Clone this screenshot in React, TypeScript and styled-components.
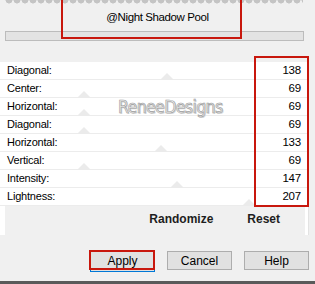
import React from "react";
import styled, { createGlobalStyle } from "styled-components";

const GlobalStyle = createGlobalStyle`
  html, body {
    margin: 0;
    padding: 0;
    background: #f0f0f0;
    overflow: hidden;
  }
  body {
    font-family: "Liberation Sans", Arial, sans-serif;
  }
`;

type Row = { label: string; value: number };

const rows: Row[] = [
  { label: "Diagonal:", value: 138 },
  { label: "Center:", value: 69 },
  { label: "Horizontal:", value: 69 },
  { label: "Diagonal:", value: 69 },
  { label: "Horizontal:", value: 133 },
  { label: "Vertical:", value: 69 },
  { label: "Intensity:", value: 147 },
  { label: "Lightness:", value: 207 },
];

const App = () => {
  return (
    <>
      <GlobalStyle />
      <Dialog>
        <Scallops />
        <PresetName>@Night Shadow Pool</PresetName>
        <PresetBar />
        <Spacer />
        <Panel>
          {rows.map((row, i) => (
            <SliderRow key={i}>
              <Label>{row.label}</Label>
              <Thumb style={{ left: row.value * 1.2 - 6 }} />
              <Value>{row.value}</Value>
            </SliderRow>
          ))}
          <Footer>
            <LinkButton>Randomize</LinkButton>
            <LinkButton>Reset</LinkButton>
          </Footer>
          <Watermark>ReneeDesigns</Watermark>
        </Panel>
        <Buttons>
          <ButtonWrap>
            <Button $focused>Apply</Button>
            <Marker $top={-1} $left={-1} $width={66} $height={20} />
          </ButtonWrap>
          <Button>Cancel</Button>
          <Button>Help</Button>
        </Buttons>
        <BottomEdge />
        <Marker $top={-4} $left={61} $width={181} $height={43} />
        <Marker $top={56} $left={254} $width={55} $height={151} />
      </Dialog>
    </>
  );
};

export default App;

const Dialog = styled.div`
  position: relative;
  width: 315px;
  height: 284px;
  display: flex;
  flex-direction: column;
  background: #f0f0f0;
  overflow: hidden;
`;

const Scallops = styled.div`
  height: 4px;
  margin: 0 12px 0 5px;
  background: radial-gradient(circle at 4px 0, #c4c4c4 3.2px, #f0f0f0 3.8px);
  background-size: 8px 4px;
`;

const PresetName = styled.div`
  height: 27px;
  display: flex;
  align-items: center;
  justify-content: center;
  font-size: 11.5px;
  letter-spacing: -0.4px;
  color: #000;
`;

const PresetBar = styled.div`
  height: 8px;
  margin: 0 11px 0 5px;
  background: #e3e3e3;
  border: 1px solid #bcbcbc;
`;

const Spacer = styled.div`
  height: 21px;
`;

const Panel = styled.div`
  position: relative;
  width: 308px;
  height: 174px;
  background: #fff;
  border-right: 1px solid #e3e3e3;
  display: flex;
  flex-direction: column;
`;

const SliderRow = styled.div`
  position: relative;
  height: 17px;
  border-bottom: 1px solid #ececec;
  display: flex;
  align-items: center;
  justify-content: space-between;
  padding: 0 7px 0 7px;
  font-size: 11px;
  color: #000;
`;

const Label = styled.span`
  letter-spacing: -0.2px;
`;

const Value = styled.span`
  font-size: 11.5px;
  letter-spacing: -0.2px;
`;

const Thumb = styled.div`
  position: absolute;
  bottom: -1px;
  width: 0;
  height: 0;
  border-left: 7px solid transparent;
  border-right: 7px solid transparent;
  border-bottom: 7px solid #ebebeb;
`;

const Footer = styled.div`
  margin: 0 3px 0 5px;
  height: 27px;
  background: #f0f0f0;
  display: flex;
  align-items: center;
  justify-content: flex-end;
  gap: 34px;
  padding-right: 25px;
  padding-bottom: 2px;
`;

const LinkButton = styled.span`
  font-size: 12px;
  font-weight: bold;
  color: #1e1e1e;
`;

const Watermark = styled.div`
  position: absolute;
  left: 118px;
  top: 35px;
  font-family: "DejaVu Sans Condensed", "DejaVu Sans", sans-serif;
  font-size: 17.5px;
  letter-spacing: -0.6px;
  color: #ececec;
  -webkit-text-stroke: 0.6px #9a9a9a;
  text-shadow: 1px 1px 0 #d8d8d8;
  pointer-events: none;
`;

const Buttons = styled.div`
  display: flex;
  gap: 12px;
  padding: 16px 0 0 90px;
  height: 30px;
`;

const ButtonWrap = styled.div`
  position: relative;
  display: flex;
`;

const Button = styled.div<{ $focused?: boolean }>`
  box-sizing: border-box;
  width: 65px;
  height: ${(p) => (p.$focused ? "21px" : "19px")};
  background: #e1e1e1;
  border: 1px solid ${(p) => (p.$focused ? "#0078d7" : "#adadad")};
  display: flex;
  align-items: center;
  justify-content: center;
  padding-bottom: ${(p) => (p.$focused ? "2px" : "0")};
  font-size: 12px;
  color: #000;
`;

const BottomEdge = styled.div`
  margin-top: auto;
  height: 3px;
  background: #5a5a5a;
`;

const Marker = styled.div<{ $top: number; $left: number; $width: number; $height: number }>`
  position: absolute;
  top: ${(p) => p.$top}px;
  left: ${(p) => p.$left}px;
  width: ${(p) => p.$width}px;
  height: ${(p) => p.$height}px;
  box-sizing: border-box;
  border: 2px solid #c8170d;
  pointer-events: none;
`;
